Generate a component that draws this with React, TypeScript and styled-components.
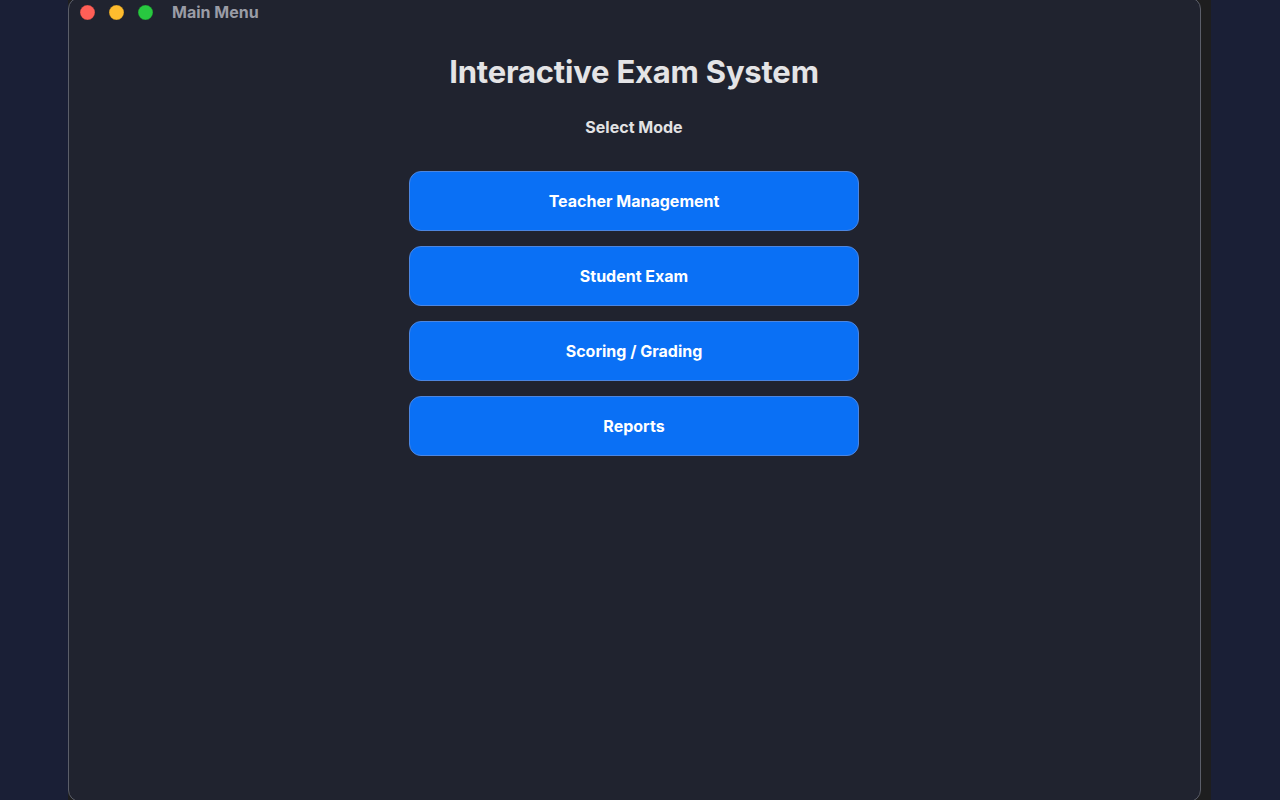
import React from "react";
import styled, { createGlobalStyle } from "styled-components";

const GlobalStyle = createGlobalStyle`
  html, body {
    margin: 0;
    padding: 0;
    height: 100%;
    background: #1a1f36;
    overflow: hidden;
  }
  #root {
    height: 100%;
  }
`;

const Desktop = styled.div`
  display: flex;
  height: 800px;
  padding-left: 68px;
`;

const Backdrop = styled.div`
  display: flex;
  width: 1143px;
  height: 100%;
  background: #1e1e1f;
`;

const Window = styled.div`
  display: flex;
  flex-flow: column;
  width: 1133px;
  height: 805px;
  margin-top: -3px;
  box-sizing: border-box;
  background: #20232f;
  border: 1px solid #5b5e69;
  border-radius: 12px;
  font-family: Inter, "Liberation Sans", sans-serif;
`;

const TitleBar = styled.div`
  display: flex;
  align-items: center;
  height: 28px;
  padding-left: 11px;
`;

const Light = styled.span<{ $color: string }>`
  width: 15px;
  height: 15px;
  border-radius: 50%;
  background: ${(p) => p.$color};
  margin-right: 14px;
  box-shadow: inset 0 0 0 0.5px rgba(0, 0, 0, 0.25);
`;

const WindowTitle = styled.span`
  margin-left: 5px;
  font-size: 16px;
  font-weight: 700;
  color: #9a9ca6;
`;

const Content = styled.div`
  display: flex;
  flex-flow: column;
  align-items: center;
  padding-top: 27px;
  padding-right: 1px;
`;

const Heading = styled.h1`
  margin: 0;
  font-size: 31px;
  font-weight: 700;
  color: #e4e4e6;
  letter-spacing: -0.2px;
`;

const Subtitle = styled.h2`
  margin: 27px 0 0;
  font-size: 16px;
  font-weight: 700;
  color: #e2e2e4;
`;

const ButtonList = styled.div`
  display: flex;
  flex-flow: column;
  gap: 15px;
  margin-top: 34px;
`;

const ModeButton = styled.button`
  width: 450px;
  height: 60px;
  border: 1px solid #4d86e0;
  border-radius: 12px;
  background: #0a70f5;
  color: #ffffff;
  font-family: Inter, "Liberation Sans", sans-serif;
  font-size: 16px;
  font-weight: 700;
  cursor: pointer;
`;

const modes = ["Teacher Management", "Student Exam", "Scoring / Grading", "Reports"];

export default function App() {
  return (
    <>
      <GlobalStyle />
      <Desktop>
        <Backdrop>
          <Window>
            <TitleBar>
              <Light $color="#ff5f57" />
              <Light $color="#febc2e" />
              <Light $color="#28c840" />
              <WindowTitle>Main Menu</WindowTitle>
            </TitleBar>
            <Content>
              <Heading>Interactive Exam System</Heading>
              <Subtitle>Select Mode</Subtitle>
              <ButtonList>
                {modes.map((m) => (
                  <ModeButton key={m}>{m}</ModeButton>
                ))}
              </ButtonList>
            </Content>
          </Window>
        </Backdrop>
      </Desktop>
    </>
  );
}
